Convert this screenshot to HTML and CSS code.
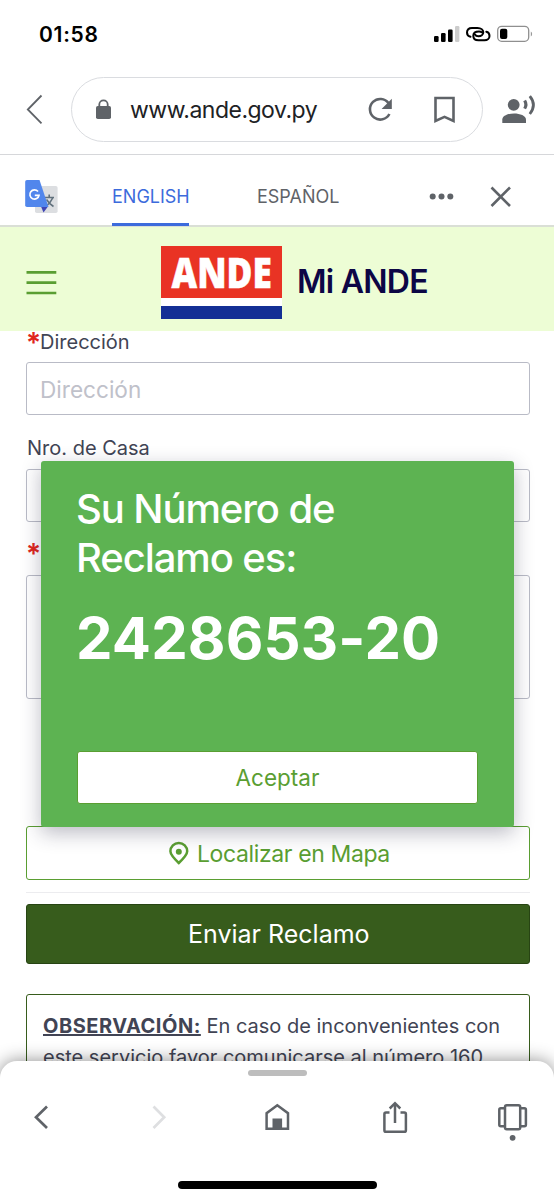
FILE: index.html
```html
<!DOCTYPE html>
<html lang="es">
<head>
<meta charset="utf-8">
<title>Mi ANDE</title>
<link rel="stylesheet" href="styles.css">
</head>
<body>
<div class="screen">
  <header class="status">
    <span class="time">01:58</span>
    <svg class="status-icons" viewBox="434 24 100 20">
      <rect x="434" y="36" width="4.6" height="6" rx="1.2"/>
      <rect x="441" y="33" width="4.6" height="9" rx="1.2"/>
      <rect x="448" y="29.5" width="4.6" height="12.5" rx="1.2"/>
      <rect x="455" y="26" width="4.4" height="16" rx="1.2" fill="#ccc"/>
      <g fill="none" stroke="#000" stroke-width="2" stroke-linecap="round">
        <path d="M470.500 36.800C468 36.200 467 34.500 467 32.500C467 29.800 469 27.900 472 27.900H477.500C481 27.900 483.300 30 483.300 32.300C483.300 34.800 481 36.300 478.500 36.300C476.500 36.300 475.500 35.500 475 34.500"/>
        <path d="M482 32.300C481 31.700 480 31.500 479 31.500C475.500 31.500 473.300 33.300 473.300 35.800C473.300 38.600 475.500 40.300 478.500 40.300H484.500C487.500 40.300 489.500 38.400 489.500 36C489.500 33.600 488.300 32.200 486.300 31.800"/>
      </g>
      <rect x="497.700" y="26.300" width="31" height="15" rx="4" fill="#fff" stroke="#8f8f8f" stroke-width="1.300"/>
      <rect x="500" y="28.700" width="7.300" height="10.300" rx="2"/>
      <path d="M530.800 31.500a3 3 0 0 1 0 5z" fill="#999"/>
    </svg>
  </header>

  <div class="toolbar">
    <svg class="back" viewBox="26 94 18 31"><path d="M41.500 95.500L27.800 109.500L41.500 123.300"/></svg>
    <div class="address">
      <svg class="lock" viewBox="95 99 17 21"><rect x="96" y="106" width="15" height="13" rx="1.800" fill="#5f6368"/><path d="M99.300 107V104.500a4.200 4.200 0 0 1 8.400 0V107" fill="none" stroke="#5f6368" stroke-width="1.800"/></svg>
      <span class="url">www.ande.gov.py</span>
      <svg class="reload" viewBox="366 95 27 27"><path d="M388.600 102.200A10.300 10.300 0 1 0 389.400 113" fill="none" stroke="#5f6368" stroke-width="2.600"/><path d="M391.800 97.800V108H381.600z" fill="#5f6368"/></svg>
      <svg class="bookmark" viewBox="433 94.500 23 29"><path d="M435.500 97.500H453.500V120.500L444.500 116.400L435.500 120.500z" fill="none" stroke="#5f6368" stroke-width="2.600"/></svg>
    </div>
    <svg class="speaker" viewBox="501 92 36 32"><g fill="#5f6368"><circle cx="513.700" cy="104.800" r="5.900"/><path d="M502.300 123V119.500C502.300 115.600 508.500 113.400 514.200 113.400S526 115.600 526 119.500V123z"/><path d="M523.300 101.300L526 99.700Q529 104.500 526 109.300L523.300 108Q525.300 104.700 523.300 101.300z"/></g><path d="M529.800 96.200Q537 105 529.800 114" fill="none" stroke="#5f6368" stroke-width="2.800"/></svg>
  </div>

  <div class="translate">
    <svg class="gt" viewBox="24 179 35 35">
      <rect x="35" y="186" width="22.600" height="27" rx="1.800" fill="#dcdee1"/>
      <path d="M44.500 197.500H54M49.200 194.500V197.500M53 197.500Q50.500 203 45.500 207M46.500 199.500Q49 203.500 53.500 206.500" stroke="#60707c" stroke-width="1.600" fill="none"/>
      <path d="M41 206.500H48L43.500 212.500z" fill="#3f45b4"/>
      <path d="M27 180H39.500L48.500 207H27A1.800 1.800 0 0 1 25.200 205.200V181.800A1.800 1.800 0 0 1 27 180z" fill="#5186ec"/>
      <path d="M38 191.500A4.600 4.600 0 1 0 39 195.300H34.800" fill="none" stroke="#fff" stroke-width="1.700"/>
    </svg>
    <span class="tab active">ENGLISH</span>
    <span class="tab other">ESPAÑOL</span>
    <svg class="dots" viewBox="429 192 26 9"><g fill="#5f6368"><circle cx="432.700" cy="196.600" r="3"/><circle cx="441.500" cy="196.600" r="3"/><circle cx="450.300" cy="196.600" r="3"/></g></svg>
    <svg class="close" viewBox="490 186 22 22"><path d="M491.500 187.500L510 206M510 187.500L491.500 206" stroke="#5f6368" stroke-width="2.600"/></svg>
  </div>

  <div class="brand">
    <svg class="menu" viewBox="26 270 31 26"><path d="M26.500 272.400H56.300M26.500 282.600H56.300M26.500 293H56.300" stroke="#5a9e32" stroke-width="2.600"/></svg>
    <div class="logo"><div class="logo-red"><span>ANDE</span></div><div class="logo-blue"></div></div>
    <span class="title">Mi ANDE</span>
  </div>

  <main class="form">
    <div class="label"><b>*</b><span class="l1">Dirección</span></div>
    <div class="field"><span class="ph">Dirección</span></div>
    <div class="label second"><span class="l2">Nro. de Casa</span></div>
    <div class="field"></div>
    <div class="label third"><b>*</b></div>
    <div class="field area"></div>
    <div class="locate">
      <svg viewBox="168 840.500 21 24"><path d="M178.800 862.500C173.500 857.500 170.400 854.300 170.400 850.800A8.400 8.400 0 0 1 187.200 850.800C187.200 854.300 184.100 857.500 178.800 862.500z" fill="none" stroke="#5a9e32" stroke-width="2.500"/><circle cx="178.800" cy="851.300" r="3" fill="#5a9e32"/></svg>
      <span>Localizar en Mapa</span>
    </div>
    <div class="rule"></div>
    <div class="send"><span>Enviar Reclamo</span></div>
    <div class="note"><div class="n1"><strong>OBSERVACIÓN:</strong> <span>En caso de inconvenientes con</span></div><div class="n2">este servicio favor comunicarse al número 160</div></div>
  </main>

  <div class="dialog">
    <div class="dtitle"><div class="d1">Su Número de</div><div class="d2">Reclamo es:</div></div>
    <div class="number">2428653-20</div>
    <div class="accept"><span>Aceptar</span></div>
  </div>

  <nav class="bottom">
    <div class="grabber"></div>
    <svg class="nav-icons" viewBox="0 1095 554 50">
      <g fill="none" stroke="#5f6368" stroke-width="2.700">
        <path d="M47 1106.500L36 1117.200L47 1128"/>
        <path d="M153.500 1106.500L164.200 1117.200L153.500 1128" stroke="#dedfe1"/>
        <path d="M266.600 1128.800V1113.200L277.300 1105.300L288 1113.200V1128.800z" stroke-width="2.500"/>
        <path d="M389.500 1112.600H386A1.600 1.600 0 0 0 384.400 1114.200V1130.200A1.600 1.600 0 0 0 386 1131.800H404.300A1.600 1.600 0 0 0 405.900 1130.200V1114.200A1.600 1.600 0 0 0 404.300 1112.600H400.500" stroke-width="2.500"/>
        <path d="M395 1123V1103.500M389.700 1108.500L395 1103.200L400.300 1108.500" stroke-width="2.500"/>
        <rect x="505" y="1105.200" width="15.200" height="24" rx="1.800" stroke-width="2.500"/>
        <path d="M505 1108.300H500.800A1.500 1.500 0 0 0 499.300 1109.800V1124.700A1.500 1.500 0 0 0 500.800 1126.200H505M520.200 1108.300H524.400A1.500 1.500 0 0 1 525.900 1109.800V1124.700A1.500 1.500 0 0 1 524.400 1126.200H520.200" stroke-width="2.500"/>
      </g>
      <rect x="272.500" y="1118.500" width="9.600" height="10.500" fill="#5f6368"/>
      <circle cx="512.600" cy="1137.800" r="2.900" fill="#5f6368"/>
    </svg>
    <div class="home"></div>
  </nav>
</div>
</body>
</html>
```
FILE: styles.css
```css
* { box-sizing: border-box; }
body { margin: 0; background: #fff; font-family: Inter, "Liberation Sans", sans-serif; }
svg { display: block; flex: none; }
span, div { white-space: nowrap; }
.screen { position: relative; width: 554px; height: 1200px; overflow: hidden; display: flex; flex-direction: column; background: #fff; }
.status { flex: none; height: 68px; padding: 0 20px 0 39px; display: flex; justify-content: space-between; align-items: center; }
.time { font-size: 21px; font-weight: 600; letter-spacing: .7px; color: #000; }
.status-icons { width: 100px; height: 20px; }
.toolbar { flex: none; height: 87px; padding: 9px 10px 0 26px; border-bottom: 1px solid #d6d7da; display: flex; align-items: flex-start; }
.back { width: 18px; height: 31px; margin-top: 17px; fill: none; stroke: #5f6368; stroke-width: 1.8; }
.address { flex: none; width: 412px; height: 65px; margin-left: 27px; border: 1.5px solid #dadce0; border-radius: 33px; display: flex; align-items: center; padding-left: 23px; }
.lock { width: 17px; height: 21px; }
.url { flex: none; width: 189px; margin-left: 18px; font-size: 23px; letter-spacing: -.5px; color: #202124; }
.reload { width: 27px; height: 27px; margin-left: 47px; }
.bookmark { width: 23px; height: 29px; margin-left: 40px; }
.speaker { width: 36px; height: 32px; margin: 15px 0 0 18px; }
.translate { flex: none; height: 72px; border-bottom: 2px solid #dadfd6; display: flex; align-items: flex-start; padding-left: 24px; font-size: 18px; }
.gt { width: 35px; height: 35px; margin-top: 24px; }
.tab { height: 71px; line-height: 83px; color: #5f6368; }
.active { width: 77px; margin-left: 53px; color: #3c6bdc; border-bottom: 3px solid #3c6bdc; border-radius: 2px 2px 0 0; }
.other { width: 82px; margin-left: 68px; }
.dots { width: 26px; height: 9px; margin: 37px 0 0 90px; }
.close { width: 22px; height: 22px; margin: 31px 0 0 35px; }
.brand { flex: none; height: 104px; background: #edfdd5; display: flex; align-items: flex-start; padding-left: 26px; }
.menu { width: 31px; height: 26px; margin-top: 43px; }
.logo { width: 121px; height: 73px; margin: 19px 0 0 104px; background: #fff; display: flex; flex-direction: column; justify-content: space-between; }
.logo-red { height: 52px; background: #e93324; display: flex; align-items: center; justify-content: center; color: #fff; }
.logo-red span { font: 800 42px/51px "Open Sans", sans-serif; transform: translateY(-1px) scaleX(.84); -webkit-text-stroke: .5px #fff; }
.logo-blue { height: 13px; background: #142f95; }
.title { margin-left: 15px; font-size: 32px; line-height: 109px; font-weight: 600; letter-spacing: -.75px; color: #0c0645; }
.form { flex: 1; min-height: 0; padding: 0 24px 0 26px; }
.label { height: 31px; line-height: 22px; font-size: 20px; color: #414454; display: flex; }
.label b { width: 14px; font-size: 28px; line-height: 25px; color: #e0261c; font-weight: 600; }
.second { height: 54px; padding: 22px 0 0 1px; }
.third { height: 53px; padding-top: 20px; }
.field { height: 53px; border: 1.5px solid #b9bbc6; border-radius: 3px; padding-left: 13px; line-height: 53px; font-size: 22.6px; color: #bfc1ca; }
.area { height: 124px; margin-bottom: 127px; }
.locate { height: 54px; border: 1.5px solid #5a9e32; border-radius: 3px; display: flex; align-items: center; padding-left: 141px; color: #5a9e32; font-size: 23px; }
.locate svg { width: 21px; height: 24px; }
.locate span { margin-left: 8px; letter-spacing: -.38px; line-height: 30px; padding-top: 1px; }
.rule { height: 1px; margin: 12px 0 11px; background: #ececef; }
.send { height: 60px; background: #375c1c; border: 1px solid #274413; border-radius: 3px; color: #fff; font-size: 25px; line-height: 58px; padding-left: 161px; }
.note { height: 120px; margin-top: 30px; border: 1.5px solid #375c1c; border-radius: 3px; padding: 16px; color: #414454; font-size: 20px; line-height: 31px; }
.note strong { text-decoration: underline; font-weight: 700; letter-spacing: .5px; }
.dialog { position: absolute; left: 41px; top: 461px; width: 473px; height: 366px; background: #5db352; border-radius: 3px; box-shadow: 0 6px 20px rgba(30,30,60,.3); padding: 23px 36px 0; color: #fff; }
.dtitle { font-size: 40px; line-height: 49px; font-weight: 500; letter-spacing: -1.1px; margin-left: -1px; }
.number { font-size: 58px; line-height: 70px; margin: 21px 0 0 -1px; font-weight: 700; letter-spacing: .15px; }
.accept { height: 53px; margin-top: 78px; border: 1.5px solid #5a9e32; border-radius: 3px; background: #fff; color: #5a9e32; font-size: 22.500px; line-height: 52px; text-align: center; }
.bottom { position: absolute; left: 0; bottom: 0; width: 554px; height: 139px; background: #fff; border-radius: 17px 17px 0 0; box-shadow: 0 0 18px rgba(0,0,0,.45); padding-top: 9px; }
.grabber { width: 59px; height: 6px; margin: 0 auto; background: #bdbdbd; border-radius: 3px; }
.nav-icons { width: 554px; height: 50px; margin-top: 19px; }
.home { width: 199px; height: 8px; margin: 36px auto 0; background: #000; border-radius: 4px; }
```
